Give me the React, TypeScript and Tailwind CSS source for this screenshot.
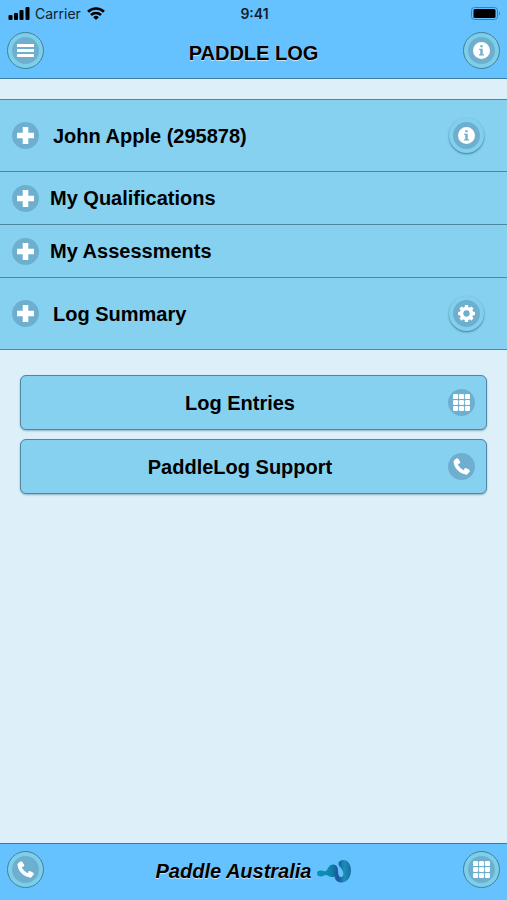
import React from 'react';
import { clsx } from 'clsx';

type IconName = 'plus' | 'bars' | 'info' | 'gear' | 'grid' | 'phone';

const gridSteps = [0, 4.9, 9.8];
const gearAngles = [0, 45, 90, 135];

const Icon: React.FC<{ name: IconName }> = ({ name }) => (
  <svg viewBox="0 0 14 14" className="size-[17px]" fill="#fff" aria-hidden="true">
    {name === 'plus' && <path d="M4.7 0h4.6v4.7H14v4.6H9.3V14H4.7V9.3H0V4.7h4.7z" />}
    {name === 'bars' && <path d="M0 1.6h14v2.6H0zM0 5.7h14v2.6H0zM0 9.8h14v2.6H0z" />}
    {name === 'info' && (
      <path
        fillRule="evenodd"
        d="M7 0a7 7 0 1 0 0 14A7 7 0 0 0 7 0zM6 2.6h2v1.8H6zM5 5.5h3v4.6h1v1.1H5v-1.1h1V6.6H5z"
      />
    )}
    {name === 'gear' && (
      <>
        {gearAngles.map((angle) => (
          <g key={angle} transform={`rotate(${angle} 7 7)`}>
            <rect x="5.6" y="0" width="2.8" height="3.4" rx="0.5" />
            <rect x="5.6" y="10.6" width="2.8" height="3.4" rx="0.5" />
          </g>
        ))}
        <circle cx="7" cy="7" r="4.1" fill="none" stroke="#fff" strokeWidth="3" />
      </>
    )}
    {name === 'grid' &&
      gridSteps.map((y) =>
        gridSteps.map((x) => <rect key={`${x}-${y}`} x={x} y={y} width="4.2" height="4.2" rx="1" />)
      )}
    {name === 'phone' && (
      <g fill="none" stroke="#fff" strokeLinecap="round">
        <path d="M2 3.2C2.2 7.400 6.400 11.800 11 12" strokeWidth="3" />
        <path d="M2 2.800L3.300 1.600l1.300 1.900" strokeWidth="2.600" strokeLinejoin="round" />
        <path d="M11 12.200l1.500-1.500-2.100-1.100" strokeWidth="2.600" strokeLinejoin="round" />
      </g>
    )}
  </svg>
);

const Disc: React.FC<{ name: IconName }> = ({ name }) => (
  <span className="flex size-[27px] shrink-0 items-center justify-center rounded-full bg-[#6eafcf]">
    <Icon name={name} />
  </span>
);

interface RoundButtonProps {
  name: IconName;
  label: string;
  flat?: boolean;
}

const RoundButton: React.FC<RoundButtonProps> = ({ name, label, flat }) => (
  <button
    aria-label={label}
    className={clsx(
      'flex shrink-0 items-center justify-center rounded-full',
      flat
        ? 'size-[35px] bg-[#80d0ee] shadow-[0_1px_2px_#3f7895]'
        : 'size-[37px] border border-[#467f9c] bg-[#7ccfe8]'
    )}
  >
    <Disc name={name} />
  </button>
);

interface RowProps {
  title: string;
  action?: { name: IconName; label: string };
}

const Row: React.FC<RowProps> = ({ title, action }) => (
  <li
    className={clsx(
      'flex items-center border-b border-[#4f87a3] bg-[#86d1ef] pl-3 pr-[23px]',
      action ? 'h-[72px]' : 'h-[53px]'
    )}
  >
    <button className={clsx('flex flex-1 items-center text-left', action ? 'gap-[14px]' : 'gap-[11px]')}>
      <Disc name="plus" />
      <span>{title}</span>
    </button>
    {action && <RoundButton name={action.name} label={action.label} flat />}
  </li>
);

const LinkButton: React.FC<{ title: string; icon: IconName }> = ({ title, icon }) => (
  <button className="flex h-[55px] w-full items-center rounded-md border border-[#4f87a3] bg-[#86d1ef] px-[11px] shadow-[0_1px_2px_#8fb0c0]">
    <span className="flex-1">{title}</span>
    <Disc name={icon} />
  </button>
);

const StatusBar: React.FC = () => (
  <div className="grid h-[27px] grid-cols-3 items-center pl-2 pr-[6px] font-[Inter,sans-serif] text-sm font-normal text-[#10202e] [text-shadow:none]">
    <div className="flex items-center gap-[5px]">
      <svg viewBox="0 0 22 13" className="h-[13px] w-[22px]" fill="#000" aria-hidden="true">
        <rect x="0.5" y="8" width="4" height="5" rx="1" />
        <rect x="6" y="6" width="4" height="7" rx="1" />
        <rect x="11.5" y="3" width="4" height="10" rx="1" />
        <rect x="17.5" y="0" width="4" height="13" rx="1" />
      </svg>
      <span>Carrier</span>
      <svg viewBox="0 0 18 13" className="ml-px h-[13px] w-[18px]" fill="none" stroke="#000" strokeWidth="2.6" aria-hidden="true">
        <path d="M1 4.7a11.5 11.5 0 0 1 16 0" />
        <path d="M4 8a7.2 7.2 0 0 1 10 0" />
        <path d="M9 13L6.2 10.2a4 4 0 0 1 5.6 0z" fill="#000" stroke="none" />
      </svg>
    </div>
    <span className="text-center font-semibold">9:41</span>
    <svg viewBox="0 0 30 13" className="h-[13px] w-[30px] justify-self-end" aria-hidden="true">
      <rect x="0.5" y="0.5" width="26" height="12" rx="3" fill="none" stroke="#3f7fae" />
      <rect x="2.5" y="2" width="22" height="9" rx="1.5" fill="#000" />
      <path d="M28 4.5q2 2 0 4z" fill="#3f7fae" />
    </svg>
  </div>
);

const Logo: React.FC = () => (
  <svg viewBox="0 0 34 24" className="h-6 w-[34px]" aria-hidden="true">
    <defs>
      <linearGradient id="wave" x1="0" y1="0" x2="1" y2="0">
        <stop offset="0" stopColor="#0a93b0" />
        <stop offset="0.4" stopColor="#0d86ac" />
        <stop offset="0.62" stopColor="#1b559c" />
        <stop offset="0.8" stopColor="#1a8fb5" />
        <stop offset="1" stopColor="#1a6ca5" />
      </linearGradient>
    </defs>
    <path
      fill="url(#wave)"
      d="M0 14.500c0-1.800 1.400-3 3.200-3 2.800 0 3.800 1.500 6 .2C11.500 10.200 11.500 5.500 16 5.500c4 0 5 3.300 5 6.500 0 4 1.500 6.500 3.500 6 2.500-.7 2.300-4.500.5-7.500-1.500-2.500-3.500-3.500-3.500-6C21.500 2.500 23.500 1 26.500 1 31 1 34 5.500 34 11.500 34 18 30 23.500 24.500 23.500c-4 0-6.500-2.500-7-6-2 1-4.500.5-6.500-.8-2.800-1.800-4.500 1-7.500.8C1.500 17.500 0 16.500 0 14.500z"
    />
  </svg>
);

const App: React.FC = () => {
  return (
    <div className="flex min-h-screen flex-col bg-[#ddf0fa] font-['Liberation_Sans',Arial,sans-serif] text-xl font-bold text-black [text-shadow:0_1px_1px_#d5e6ee]">
      <header className="border-b border-[#3f7ba1] bg-[#66c1ff] pb-[9px]">
        <StatusBar />
        <div className="flex items-center justify-between px-[7px] pt-[5px]">
          <RoundButton name="bars" label="Menu" />
          <h1 className="pt-1">PADDLE LOG</h1>
          <RoundButton name="info" label="Info" />
        </div>
      </header>

      <main className="flex-1 pt-5">
        <ul className="border-t border-[#4f87a3]">
          <Row title="John Apple (295878)" action={{ name: 'info', label: 'Member details' }} />
          <Row title="My Qualifications" />
          <Row title="My Assessments" />
          <Row title="Log Summary" action={{ name: 'gear', label: 'Summary settings' }} />
        </ul>
        <div className="flex flex-col gap-[9px] px-5 pt-[25px]">
          <LinkButton title="Log Entries" icon="grid" />
          <LinkButton title="PaddleLog Support" icon="phone" />
        </div>
      </main>

      <footer className="flex h-[57px] items-center justify-between border-t border-[#3f7ba1] bg-[#66c1ff] px-[7px] pb-[6px]">
        <RoundButton name="phone" label="Call" />
        <div className="flex items-center gap-[6px] pt-1">
          <span className="italic">Paddle Australia</span>
          <Logo />
        </div>
        <RoundButton name="grid" label="Log entries" />
      </footer>
    </div>
  );
};

export default App;
